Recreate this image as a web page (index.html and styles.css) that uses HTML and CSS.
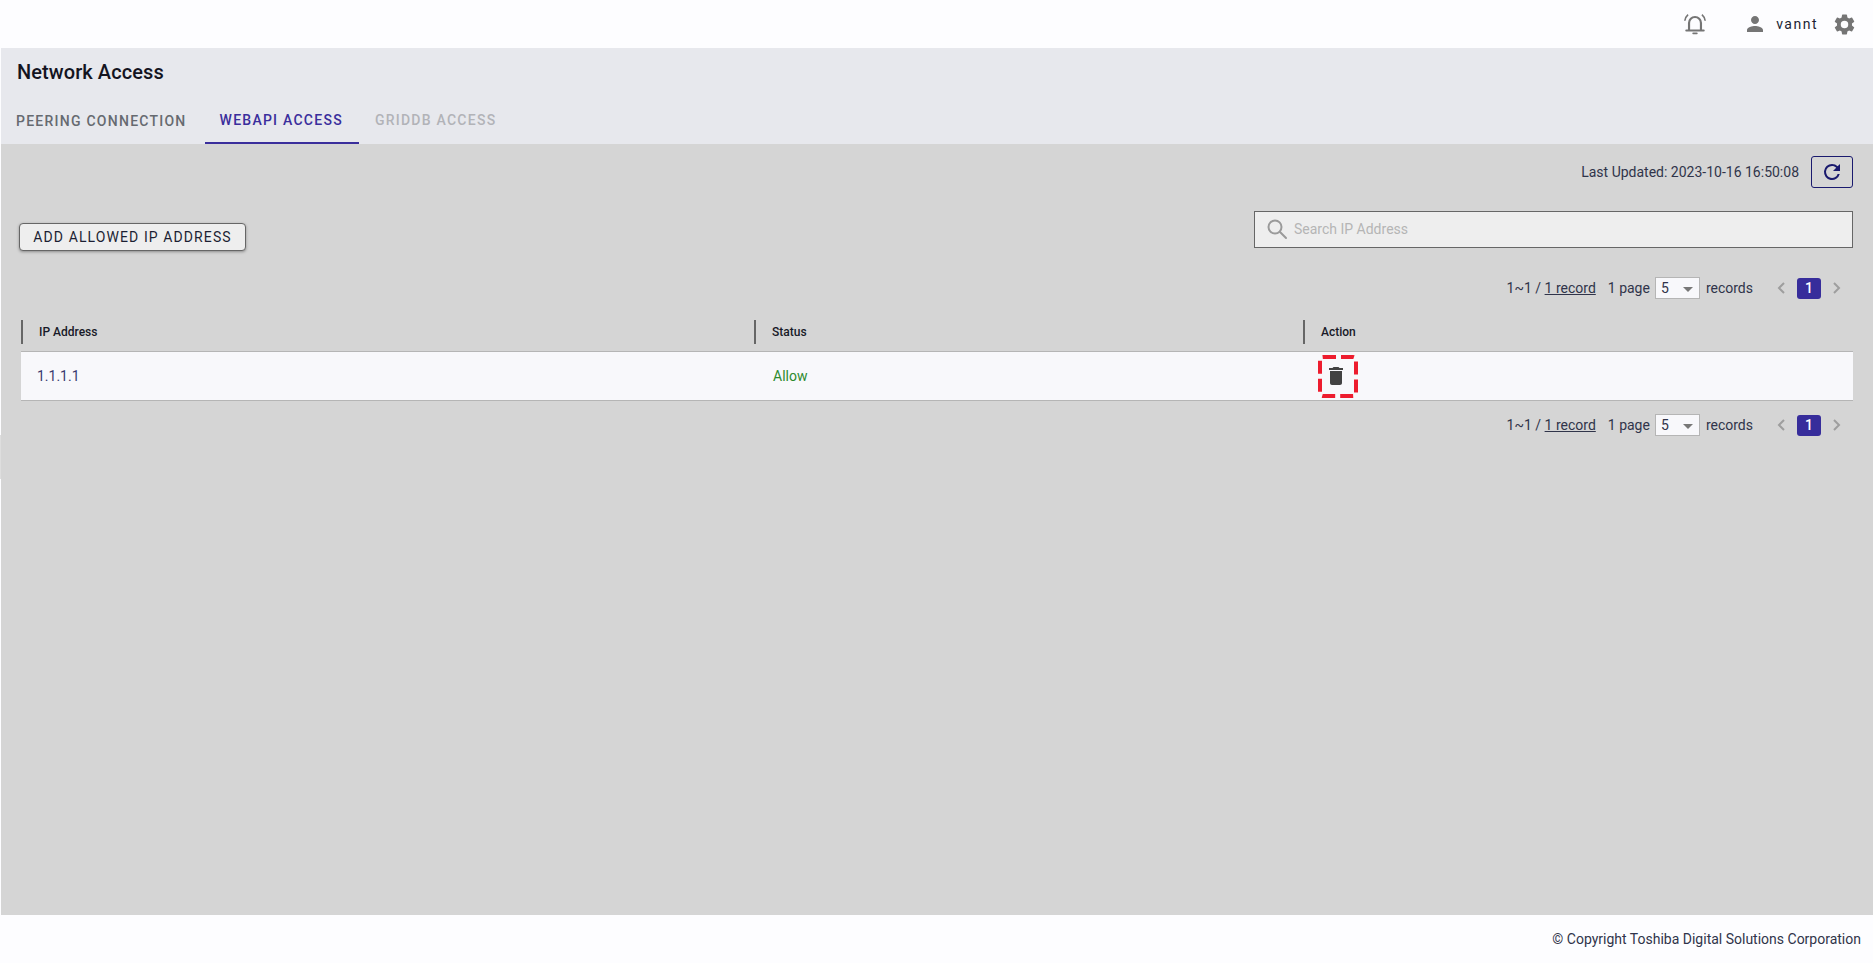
FILE: index.html
```html
<!DOCTYPE html>
<html lang="en">
<head>
<meta charset="utf-8">
<title>Network Access</title>
<link rel="stylesheet" href="styles.css">
</head>
<body>
<div class="app">
  <span class="handle"></span>
  <header class="topbar">
    <svg class="bell" viewBox="0 0 24 24" width="26" height="26" fill="none" stroke="#757575" stroke-width="2"><path d="M6.5 17.5V11a5.5 5.5 0 0 1 11 0v6.5"/><path d="M4 18h16" stroke-linecap="round"/><path d="M10.3 20.6h3.4" stroke-width="1.6" stroke-linecap="round"/><path d="M5.6 3.4A9 9 0 0 0 2.6 9M18.4 3.4a9 9 0 0 1 3 5.6" stroke-width="1.5"/></svg>
    <svg class="user" viewBox="0 0 24 24" width="24" height="24" fill="#757575"><path d="M12 12c2.21 0 4-1.79 4-4s-1.79-4-4-4-4 1.79-4 4 1.79 4 4 4zm0 2c-2.67 0-8 1.34-8 4v2h16v-2c0-2.66-5.33-4-8-4z"/></svg>
    <span class="username">vannt</span>
    <svg class="gear" viewBox="0 0 24 24" width="25" height="25" fill="#757575"><path d="M19.14 12.94c.04-.3.06-.61.06-.94 0-.32-.02-.64-.07-.94l2.03-1.58a.49.49 0 0 0 .12-.61l-1.92-3.32a.49.49 0 0 0-.59-.22l-2.39.96c-.5-.38-1.03-.7-1.62-.94l-.36-2.54a.48.48 0 0 0-.48-.41h-3.84a.47.47 0 0 0-.47.41l-.36 2.54c-.59.24-1.13.57-1.62.94l-2.39-.96a.49.49 0 0 0-.59.22L2.74 8.87a.48.48 0 0 0 .12.61l2.03 1.58c-.05.3-.09.63-.09.94s.02.64.07.94l-2.03 1.58a.49.49 0 0 0-.12.61l1.92 3.32c.12.22.37.29.59.22l2.39-.96c.5.38 1.03.7 1.62.94l.36 2.54c.05.24.24.41.48.41h3.84c.24 0 .44-.17.47-.41l.36-2.54c.59-.24 1.13-.56 1.62-.94l2.39.96c.22.08.47 0 .59-.22l1.92-3.32a.48.48 0 0 0-.12-.61l-2.01-1.58zM12 15.6A3.6 3.6 0 1 1 12 8.4a3.6 3.6 0 0 1 0 7.2z"/></svg>
  </header>

  <section class="pagehead">
    <h1 class="title">Network Access</h1>
    <nav class="tabs">
      <a class="tab">PEERING CONNECTION</a>
      <a class="tab tab-active">WEBAPI ACCESS</a>
      <a class="tab tab-disabled">GRIDDB ACCESS</a>
    </nav>
  </section>

  <main class="content">
    <div class="updated">
      <span class="updated-text">Last Updated: 2023-10-16 16:50:08</span>
      <button class="refresh" aria-label="Refresh">
        <svg viewBox="0 0 24 24" width="24" height="24" fill="#1a1a6e"><path d="M17.65 6.35A7.96 7.96 0 0 0 12 4a8 8 0 1 0 7.73 10h-2.08A6 6 0 1 1 12 6c1.66 0 3.14.69 4.22 1.78L13 11h7V4l-2.35 2.35z"/></svg>
      </button>
    </div>

    <div class="actions">
      <button class="add-btn">ADD ALLOWED IP ADDRESS</button>
      <label class="search">
        <svg viewBox="0 0 24 24" width="24" height="24" fill="none" stroke="#9a9a9a" stroke-width="2"><circle cx="10" cy="10" r="6.5"/><path d="M15 15l6 6" stroke-linecap="round"/></svg>
        <span class="placeholder">Search IP Address</span>
      </label>
    </div>

    <div class="pager pager-top">
      <span>1~1 / <u>1 record</u></span>
      <span class="perpage">1 page</span>
      <span class="select">5<i class="caret"></i></span>
      <span class="records">records</span>
      <svg class="chev" viewBox="0 0 10 14" width="10" height="14" fill="none" stroke="#9e9e9e" stroke-width="2"><path d="M8 2L3 7l5 5"/></svg>
      <span class="page-num">1</span>
      <svg class="chev" viewBox="0 0 10 14" width="10" height="14" fill="none" stroke="#9e9e9e" stroke-width="2"><path d="M2 2l5 5-5 5"/></svg>
    </div>

    <div class="table">
      <div class="thead">
        <div class="th th-ip">IP Address</div>
        <div class="th th-status">Status</div>
        <div class="th th-action">Action</div>
      </div>
      <div class="tr">
        <div class="td td-ip">1.1.1.1</div>
        <div class="td td-status">Allow</div>
        <div class="td td-action">
          <svg class="del" viewBox="0 0 40 43" width="40" height="43">
            <rect x="2" y="2" width="36" height="39" rx="3" fill="none" stroke="#ed1c2e" stroke-width="4" stroke-dasharray="13 5"/>
            <path transform="translate(6 9)" fill="#424242" d="M6 19c0 1.1.9 2 2 2h8c1.1 0 2-.9 2-2V7H6v12zM19 4h-3.5l-1-1h-5l-1 1H5v2h14V4z"/>
          </svg>
        </div>
      </div>
    </div>

    <div class="pager pager-bottom">
      <span>1~1 / <u>1 record</u></span>
      <span class="perpage">1 page</span>
      <span class="select">5<i class="caret"></i></span>
      <span class="records">records</span>
      <svg class="chev" viewBox="0 0 10 14" width="10" height="14" fill="none" stroke="#9e9e9e" stroke-width="2"><path d="M8 2L3 7l5 5"/></svg>
      <span class="page-num">1</span>
      <svg class="chev" viewBox="0 0 10 14" width="10" height="14" fill="none" stroke="#9e9e9e" stroke-width="2"><path d="M2 2l5 5-5 5"/></svg>
    </div>
  </main>

  <footer class="footer">© Copyright Toshiba Digital Solutions Corporation</footer>
</div>
</body>
</html>
```
FILE: styles.css
```css
* { box-sizing: border-box; }
html, body { margin: 0; height: 100%; overflow: hidden; }
body { font-family: Roboto, "Liberation Sans", sans-serif; font-size: 14px; color: #262b3a; background: #fdfdff; }
.app { position: relative; display: flex; flex-direction: column; height: 963px; }
.handle { position: absolute; left: 0; top: 435px; width: 1px; height: 44px; background: #dedede; }

.topbar { height: 48px; flex: none; display: flex; align-items: center; justify-content: flex-end; padding-right: 16px; background: #fdfdff; }
.bell { margin-right: 35px; }
.username { margin: 0 14px 0 9px; font-size: 14px; font-weight: 400; letter-spacing: 1.5px; color: #1c1f33; }

.pagehead { height: 96px; flex: none; margin-left: 1px; background: #e7e8ed; display: flex; flex-direction: column; }
.title { margin: 0; padding: 13px 0 0 16px; height: 56px; font-size: 20px; font-weight: 500; letter-spacing: .08px; line-height: 23px; color: #14141f; }
.tabs { display: flex; height: 40px; }
.tab { display: block; padding: 0 16px 0 15px; line-height: 34px; font-size: 14px; font-weight: 500; letter-spacing: 1.25px; color: #666a70; }
.tab-active { padding: 0 16px 0 15px; margin-left: 2px; color: #3a2e9c; line-height: 32px; border-bottom: 2px solid #3a2e9c; }
.tab-disabled { padding: 0 16px; color: #b2b3b8; line-height: 32px; }

.content { flex: 1; margin-left: 1px; background: #d5d5d5; padding: 12px 20px 0 18px; }
.updated { display: flex; justify-content: flex-end; align-items: center; height: 32px; }
.updated-text { margin-right: 12px; color: #30344a; }
.refresh { width: 42px; height: 32px; padding: 0; border: 1px solid #1a1a6e; border-radius: 3px; background: transparent; display: flex; align-items: center; justify-content: center; }

.actions { display: flex; justify-content: space-between; align-items: flex-start; margin-top: 23px; height: 37px; }
.add-btn { margin-top: 12px; width: 227px; height: 28px; padding: 0; background: #eeeeee; border: 1px solid #666; border-radius: 4px; box-shadow: 0 1px 3px rgba(0,0,0,.35); font: 400 14px Roboto, sans-serif; letter-spacing: 1.1px; color: #1c1f33; }
.search { width: 599px; height: 37px; display: flex; align-items: center; gap: 5px; padding: 0 0 1px 10px; background: #eeeeee; border: 1px solid #666; }
.placeholder { color: #b5b5b5; }

.pager { display: flex; align-items: center; justify-content: flex-end; height: 24px; color: #30344a; padding-right: 11px; }
.pager-top { margin-top: 28px; }
.pager-bottom { margin-top: 12px; }
.perpage { margin-left: 12px; margin-right: 5px; }
.select { position: relative; width: 45px; height: 22px; padding-left: 5px; line-height: 20px; background: #f8f8fb; border: 1px solid #b5b5b5; }
.caret { position: absolute; right: 6px; top: 9px; border: 5px solid transparent; border-top: 5px solid #777; border-bottom: 0; }
.records { margin-left: 6px; margin-right: 23px; }
.page-num { width: 24px; height: 21px; margin: 0 11px; line-height: 21px; text-align: center; color: #fff; font-weight: 500; background: #372d9b; border-radius: 3px; }

.table { margin-top: 20px; margin-left: 2px; }
.thead { display: flex; height: 32px; padding-bottom: 7px; border-bottom: 1px solid #b5b5b5; }
.th { height: 24px; line-height: 24px; font-size: 12px; font-weight: 500; color: #181a28; border-left: 2px solid #666; }
.th-ip { width: 733px; padding-left: 16px; }
.th-status { width: 549px; padding-left: 16px; }
.th-action { padding-left: 16px; }
.tr { display: flex; align-items: center; height: 49px; background: #f8f8fb; border-bottom: 1px solid #b5b5b5; }
.td-ip { width: 733px; padding-left: 16px; color: #3a3a6e; }
.td-status { width: 549px; padding-left: 19px; color: #2e8b2e; }
.td-action { padding-left: 15px; height: 43px; }
.del { display: block; }

.footer { height: 48px; flex: none; display: flex; align-items: center; justify-content: flex-end; padding-right: 12px; color: #30344a; background: #fdfdff; }
```
